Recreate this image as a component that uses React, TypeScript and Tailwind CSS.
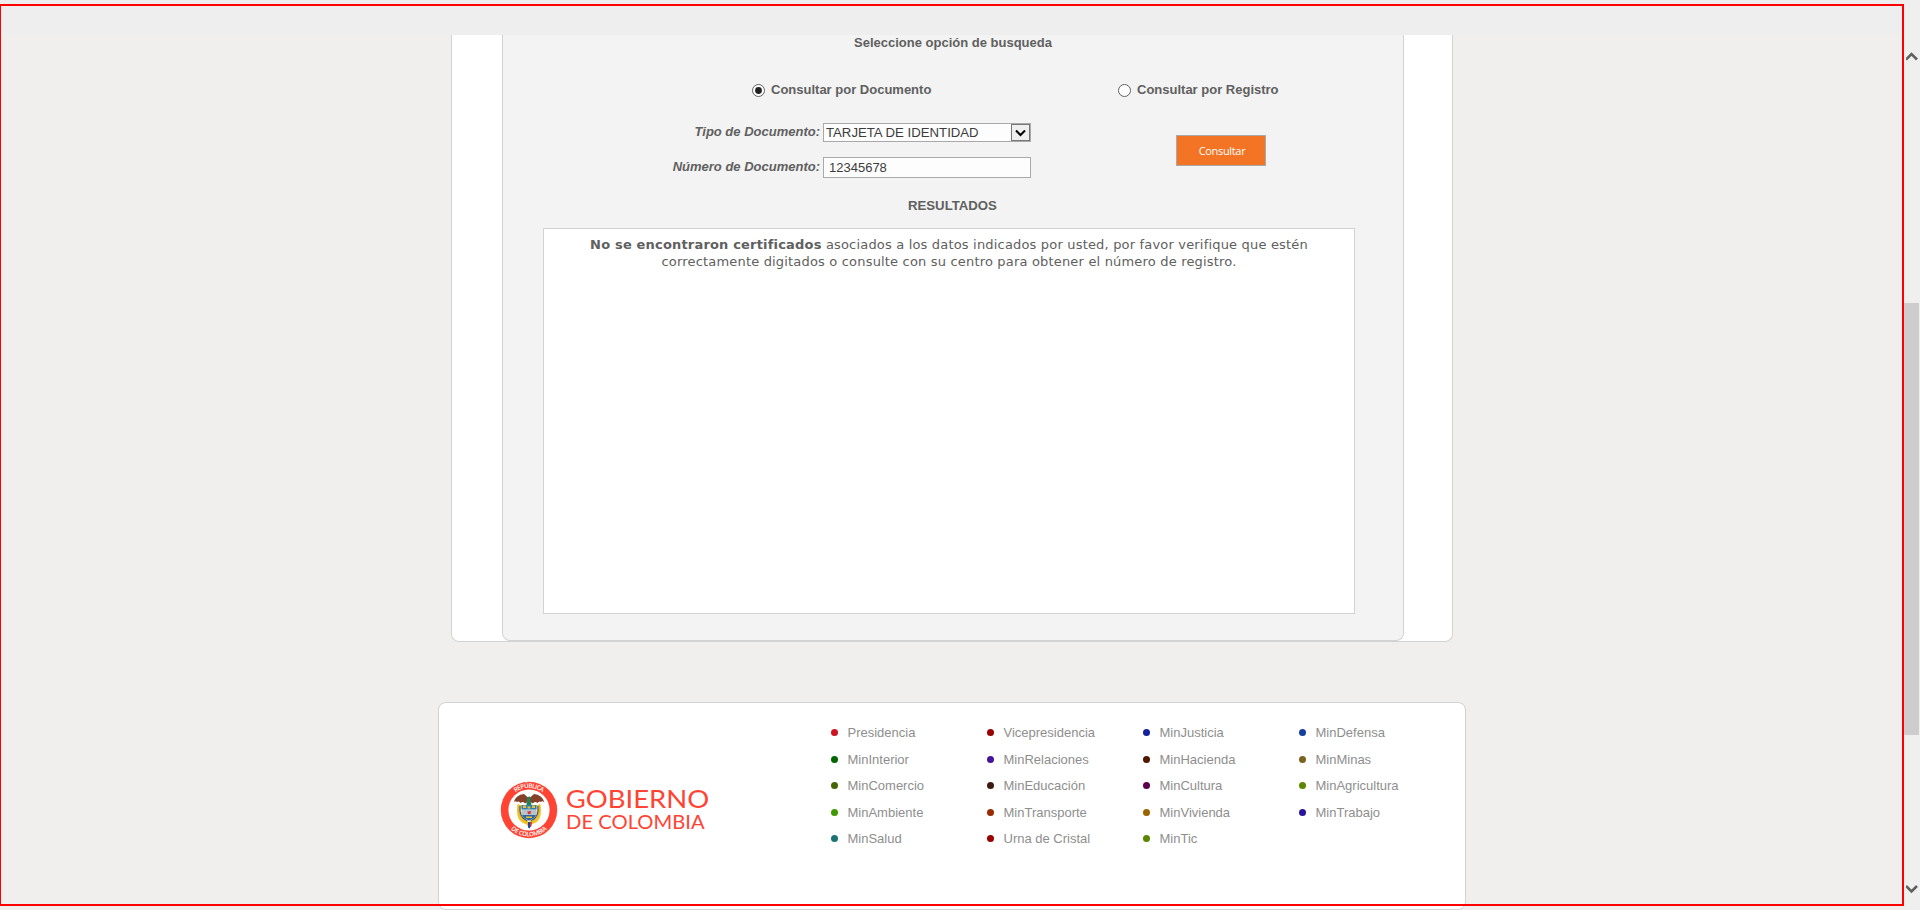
import React from "react";

const ministries: [string, string][][] = [
  [["Presidencia", "#cc1422"], ["MinInterior", "#006600"], ["MinComercio", "#446600"], ["MinAmbiente", "#409900"], ["MinSalud", "#1c7373"]],
  [["Vicepresidencia", "#990000"], ["MinRelaciones", "#44149c"], ["MinEducación", "#3d1a10"], ["MinTransporte", "#992b00"], ["Urna de Cristal", "#990000"]],
  [["MinJusticia", "#14209c"], ["MinHacienda", "#4f1600"], ["MinCultura", "#5c004c"], ["MinVivienda", "#996300"], ["MinTic", "#5c8500"]],
  [["MinDefensa", "#143f9c"], ["MinMinas", "#7a6320"], ["MinAgricultura", "#5c8500"], ["MinTrabajo", "#2b149c"]],
];

function Radio({ checked }: { checked?: boolean }) {
  return (
    <svg width="13" height="13" viewBox="0 0 13 13" className="mt-px shrink-0">
      <circle cx="6.5" cy="6.5" r="6" fill="#fff" stroke="#606060" />
      {checked && <circle cx="6.5" cy="6.5" r="3.4" fill="#222" />}
    </svg>
  );
}

function Logo() {
  return (
    <svg width="216" height="60" viewBox="0 0 216 60" className="block">
      <defs>
        <path id="arcTop" d="M7.8 30 A22.2 22.2 0 0 1 52.2 30" />
        <path id="arcBottom" d="M3.6 30 A26.4 26.4 0 0 0 56.4 30" />
      </defs>
      <circle cx="30" cy="30" r="28.2" fill="#ff4433" />
      <circle cx="30" cy="30" r="20.6" fill="#fff" />
      <g fill="#fff" fontFamily="'Open Sans', sans-serif" fontWeight="600" fontSize="6.2">
        <text textAnchor="middle"><textPath href="#arcTop" startOffset="50%" textLength="29">REPÚBLICA</textPath></text>
        <text textAnchor="middle"><textPath href="#arcBottom" startOffset="50%" textLength="40">DE COLOMBIA</textPath></text>
      </g>
      <path d="M18.5 24 Q15.5 43 29 44.5 L29 40 Q21 38 22 25Z" fill="#efc52a" />
      <path d="M41.5 24 Q44.5 43 31 44.5 L31 40 Q39 38 38 25Z" fill="#efc52a" />
      <path d="M21 26 Q19.5 37 28 40.5 M39 26 Q40.5 37 32 40.5" fill="none" stroke="#174f9c" strokeWidth="1.1" />
      <path d="M19.8 26 Q19 38 28 42 M40.2 26 Q41 38 32 42" fill="none" stroke="#d8902a" strokeWidth="0.6" />
      <path d="M14.5 22.5 Q17 14.5 25 14 L29 17.5 L31 17.5 L35 14 Q43 14.5 45.5 22.5 Q43 20.5 42 22 Q40 20.5 38.5 23 Q36 21 34 23.5 L30 21 L26 23.5 Q24 21 21.5 23 Q20 20.5 18 22 Q16 20.5 14.5 22.5Z" fill="#85402a" />
      <path d="M28.2 17 L31 16.5 L32.5 25 L27.5 25Z" fill="#268050" />
      <path d="M22.5 25 H37.5 V34 Q37 38 30 41 Q23 38 22.5 34Z" fill="#b8c2ca" />
      <path d="M22.5 25 H37.5 V29.3 H22.5Z" fill="#2f7fb8" />
      <path d="M23 35 H37 L35 38 L30 40.5 L25 38Z" fill="#2c68a3" />
      <path d="M24 25.5 h3 v2.4 h-3z M33 25.5 h3 v2.4 h-3z M28.5 26.5 h3 v2 h-3z M27 36.5 h6 v1.4 h-6z" fill="#e8c22e" />
      <path d="M28.3 31.5 L32 31 L31.5 34 L29 34.2Z" fill="#d33a38" />
      <path d="M27 42 H29 V46.5 L27.5 44.5Z" fill="#efc020" />
      <path d="M29 42 H31 V48.5 L29 47.5Z" fill="#1c4699" />
      <path d="M31 42 H33 L32.5 46 L31 47.5Z" fill="#d03833" />
      <g fill="#ff4433" fontFamily="Lato, sans-serif">
        <text x="66.7" y="27.5" fontSize="24.5" textLength="143.5" lengthAdjust="spacingAndGlyphs">GOBIERNO</text>
        <text x="67.1" y="48.7" fontSize="19.5" textLength="138.5" lengthAdjust="spacingAndGlyphs">DE COLOMBIA</text>
      </g>
    </svg>
  );
}

export default function App() {
  return (
    <div className="relative flex h-[910px] w-[1920px] overflow-hidden bg-[#f0efed] font-['Liberation_Sans',Arial,sans-serif] text-[13px] text-[#606060]">
      <main className="flex h-full w-[1904px] shrink-0 flex-col">
        <header className="h-[35px] shrink-0 bg-[#eeeeee]" />
        <section className="ml-[451px] flex h-[607px] w-[1002px] shrink-0 rounded-b-lg border border-t-0 border-[#d2d2d3] bg-white pl-[50px]">
          <form className="flex h-[606px] w-[902px] flex-col rounded-b-lg border border-t-0 border-[#d2d2d3] bg-[#f3f3f3] font-bold">
            <h2 className="h-[35px] pl-[351px] leading-[15px] whitespace-nowrap">Seleccione opción de busqueda</h2>
            <div className="flex h-[39px] items-center leading-[15px] whitespace-nowrap">
              <label className="ml-[249px] flex w-[366px] items-center gap-[6px]"><Radio checked />Consultar por Documento</label>
              <label className="flex items-center gap-[6px]"><Radio />Consultar por Registro</label>
            </div>
            <div className="mt-px flex h-[69px] pt-[13px]">
              <div className="flex w-[528px] flex-col">
                <div className="flex h-[34px] justify-end gap-[3px]">
                  <label className="pt-px leading-[15px] italic">Tipo de Documento:</label>
                  <div className="flex h-[19px] w-[208px] justify-between border border-[#a9a9a9] bg-[#fdfdfd] text-[13.2px] font-normal text-[#3c3c3c]">
                    <span className="pl-[2px] leading-[17px] whitespace-nowrap">TARJETA DE IDENTIDAD</span>
                    <span className="flex h-[17px] w-[19px] items-center justify-center border border-[#777] bg-[#efefef]">
                      <svg width="11" height="8" viewBox="0 0 11 8"><path d="M1 1.5 L5.5 6 L10 1.5" fill="none" stroke="#000" strokeWidth="2" /></svg>
                    </span>
                  </div>
                </div>
                <div className="flex justify-end gap-[3px]">
                  <label className="pt-[2px] leading-[15px] italic">Número de Documento:</label>
                  <div className="h-[21px] w-[208px] border border-[#a9a9a9] bg-[#fdfdfd] pl-[5px] leading-[19px] font-normal text-[#3c3c3c]">12345678</div>
                </div>
              </div>
              <button type="button" className="mt-[12px] ml-[145px] h-[31px] w-[90px] border border-[#a9a9a9] bg-[#f37424] pt-[2px] pl-[2px] font-['Open_Sans',sans-serif] text-[11px] font-normal tracking-[-0.33px] text-white">Consultar</button>
            </div>
            <h3 className="mt-[19px] h-[30px] pl-[405px] text-[13.2px] leading-[15px]">RESULTADOS</h3>
            <div className="ml-[40px] h-[386px] w-[812px] border border-[#d2d2d3] bg-white pt-[7px] text-center font-['DejaVu_Sans',Verdana,sans-serif] text-[13px] leading-[17px] font-normal tracking-[0.18px]">
              <p className="whitespace-nowrap"><b>No se encontraron certificados</b> asociados a los datos indicados por usted, por favor verifique que estén</p>
              <p className="whitespace-nowrap">correctamente digitados o consulte con su centro para obtener el número de registro.</p>
            </div>
          </form>
        </section>
        <footer className="mt-[60px] ml-[438px] flex h-[208px] w-[1028px] shrink-0 rounded-lg border border-[#d2d2d3] bg-white">
          <div className="w-[385px] pt-[77px] pl-[60px]"><Logo /></div>
          <nav className="grid grid-cols-[repeat(4,156px)] pt-[16.5px] text-[#8e8e8e]">
            {ministries.map((column, i) => (
              <ul key={i}>
                {column.map(([name, color]) => (
                  <li key={name} className="flex h-[26.5px] items-center pl-[6.5px] whitespace-nowrap">
                    <i className="mr-[10px] size-[7px] rounded-full" style={{ backgroundColor: color }} />{name}
                  </li>
                ))}
              </ul>
            ))}
          </nav>
        </footer>
      </main>
      <aside className="flex w-[16px] shrink-0 flex-col bg-[#efefef]">
        <svg className="mt-[50px] ml-[2px]" width="12" height="12" viewBox="0 0 12 12"><path d="M0 9.5 L5.5 4 L11 9.5" fill="none" stroke="#606060" strokeWidth="2.6" /></svg>
        <div className="mt-[241px] h-[432px] w-[15px] bg-[#cdcdcd]" />
        <svg className="mt-[148px] ml-[2px]" width="12" height="12" viewBox="0 0 12 12"><path d="M0 3 L5.5 8.5 L11 3" fill="none" stroke="#606060" strokeWidth="2.6" /></svg>
      </aside>
      <div className="pointer-events-none absolute top-[4px] -left-px h-[902px] w-[1905px] border-2 border-[#ff0000]" />
    </div>
  );
}
